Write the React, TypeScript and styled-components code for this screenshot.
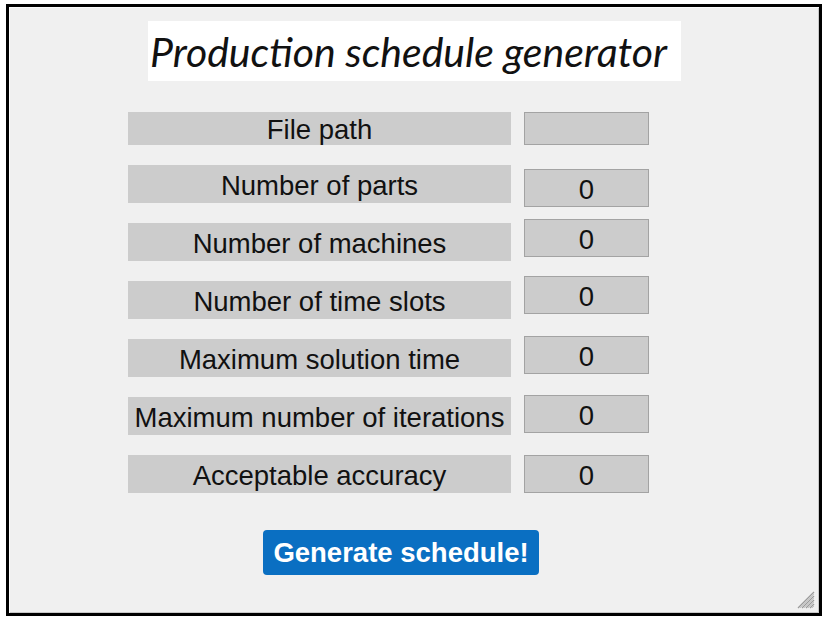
import React from 'react'
import styled, { createGlobalStyle } from 'styled-components'

const GlobalStyle = createGlobalStyle`
  html, body {
    margin: 0;
    padding: 0;
    background: #ffffff;
  }
`

const Page = styled.div`
  width: 826px;
  height: 624px;
  padding: 4px 0 0 6px;
  box-sizing: border-box;
`

const Frame = styled.div`
  position: relative;
  width: 816px;
  height: 612px;
  box-sizing: border-box;
  border: 3px solid #000;
  background: #f0f0f0;
  box-shadow: inset 1px 1px 0 #fbfbfb, inset -1px -1px 0 #c8c8c8;
  display: flex;
  flex-direction: column;
`

const Title = styled.h1`
  align-self: center;
  width: 533px;
  height: 60px;
  box-sizing: border-box;
  padding-right: 12px;
  margin: 14px 0 0 1px;
  background: #ffffff;
  font-family: Lato, 'Open Sans', sans-serif;
  font-style: italic;
  font-weight: 400;
  font-size: 41px;
  line-height: 62px;
  color: #111;
  text-align: center;
`

const Form = styled.div`
  display: grid;
  grid-template-columns: 383px 125px;
  column-gap: 13px;
  row-gap: 20px;
  margin: 31px 0 0 119px;
`

const Label = styled.div<{ $h: number }>`
  height: ${(p) => p.$h}px;
  box-sizing: border-box;
  padding-top: 3px;
  background: #cccccc;
  font-family: 'Liberation Sans', Arial, sans-serif;
  font-size: 27.5px;
  color: #111;
  display: flex;
  align-items: center;
  justify-content: center;
  white-space: nowrap;
`

const Field = styled.div<{ $h: number; $shift: number }>`
  height: ${(p) => p.$h}px;
  box-sizing: border-box;
  padding-top: 3px;
  border: 1px solid #a3a3a3;
  background: #cccccc;
  font-family: 'Liberation Sans', Arial, sans-serif;
  font-size: 27.5px;
  color: #111;
  display: flex;
  align-items: center;
  justify-content: center;
  transform: translateY(${(p) => p.$shift}px);
`

const Button = styled.button`
  align-self: flex-start;
  margin: 37px 0 0 254px;
  width: 276px;
  height: 45px;
  border: none;
  border-radius: 4px;
  background: #0a6fc2;
  color: #ffffff;
  font-family: 'Liberation Sans', Arial, sans-serif;
  font-weight: 700;
  font-size: 27.5px;
  padding: 0;
  cursor: pointer;
`

const Grip = styled.svg`
  position: absolute;
  right: 4px;
  bottom: 4px;
`

const rows = [
  { label: 'File path', value: '', h: 33, shift: 0 },
  { label: 'Number of parts', value: '0', h: 38, shift: 4 },
  { label: 'Number of machines', value: '0', h: 38, shift: -4 },
  { label: 'Number of time slots', value: '0', h: 38, shift: -5 },
  { label: 'Maximum solution time', value: '0', h: 38, shift: -3 },
  { label: 'Maximum number of iterations', value: '0', h: 38, shift: -2 },
  { label: 'Acceptable accuracy', value: '0', h: 38, shift: 0 },
]

const App = () => {
  return (
    <Page>
      <GlobalStyle />
      <Frame>
        <Title>Production schedule generator</Title>
        <Form>
          {rows.map((r) => (
            <React.Fragment key={r.label}>
              <Label $h={r.h}>{r.label}</Label>
              <Field $h={r.h} $shift={r.shift}>
                {r.value}
              </Field>
            </React.Fragment>
          ))}
        </Form>
        <Button>Generate schedule!</Button>
        <Grip width="18" height="18" viewBox="0 0 18 18">
          {[0, 4, 8, 12].map((o) => (
            <line key={o} x1={17} y1={1 + o} x2={1 + o} y2={17} stroke="#9a9a9a" strokeWidth="1.2" />
          ))}
          {[2, 6, 10, 14].map((o) => (
            <line key={o} x1={17} y1={1 + o} x2={1 + o} y2={17} stroke="#c4c4c4" strokeWidth="1" />
          ))}
        </Grip>
      </Frame>
    </Page>
  )
}

export default App
